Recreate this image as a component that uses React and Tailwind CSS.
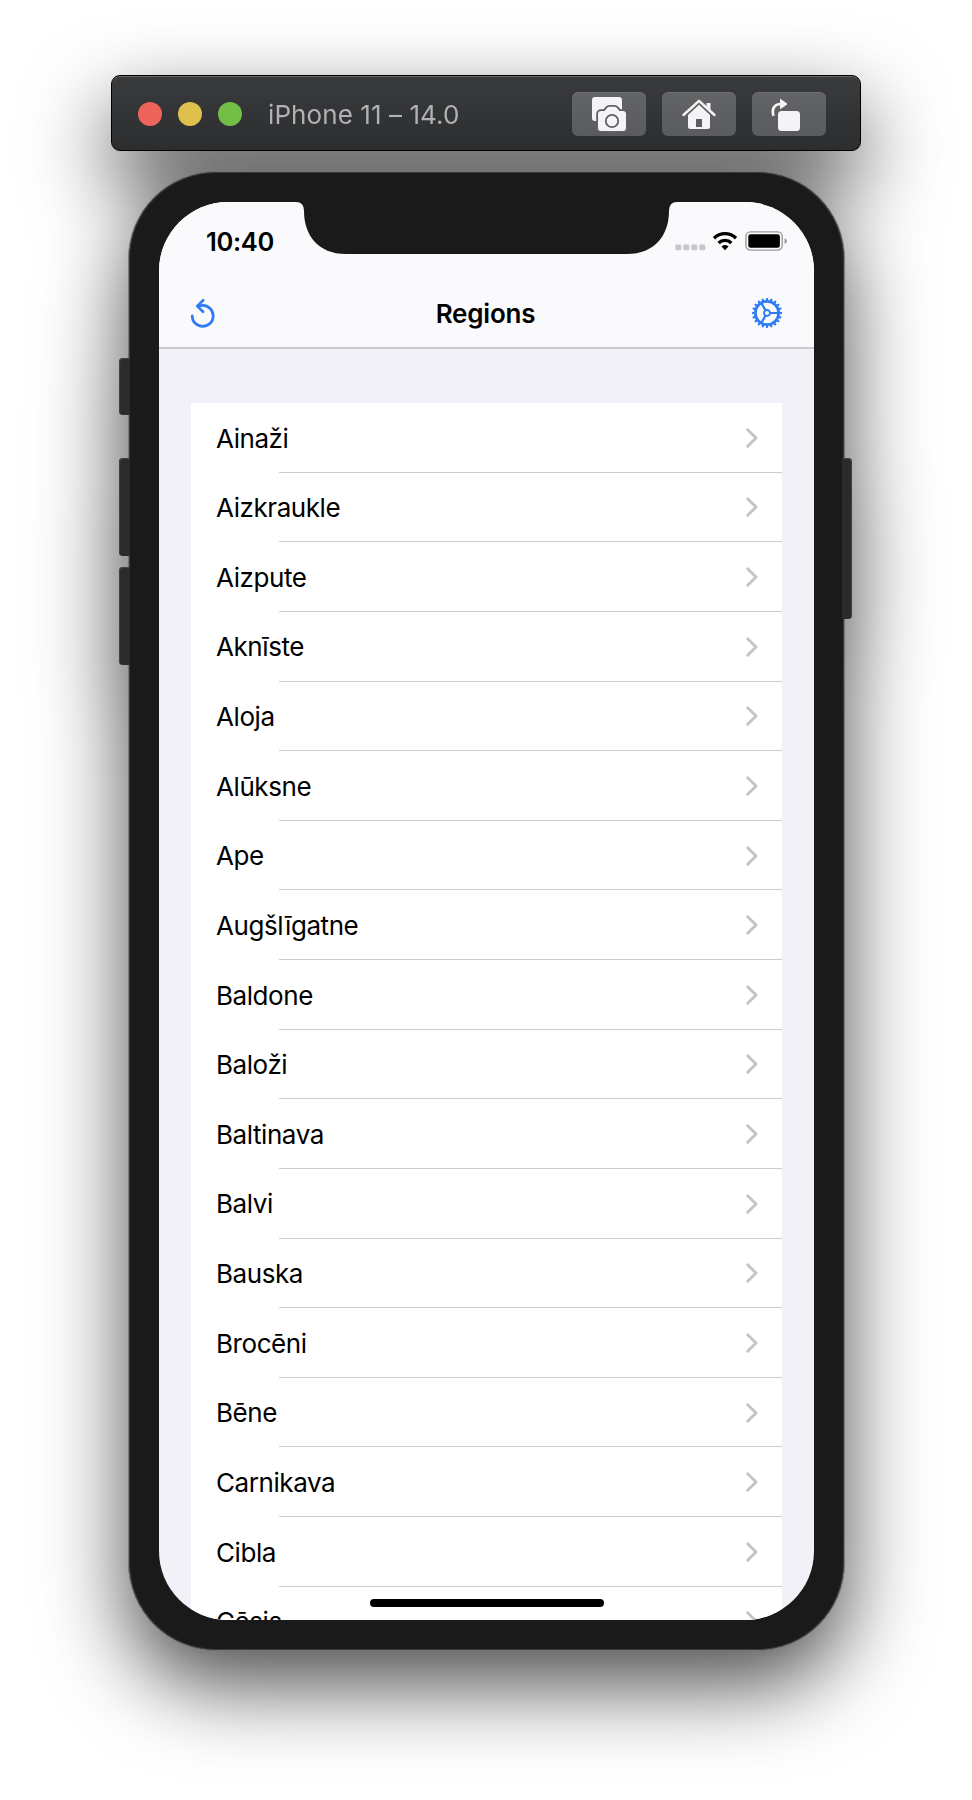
const regions = [
  'Ainaži', 'Aizkraukle', 'Aizpute', 'Aknīste', 'Aloja', 'Alūksne', 'Ape', 'Augšlīgatne', 'Baldone',
  'Baloži', 'Baltinava', 'Balvi', 'Bauska', 'Brocēni', 'Bēne', 'Carnikava', 'Cibla', 'Cēsis',
];

const teeth = Array.from({ length: 20 }, (_, i) => i * 18);

function ToolButton({ children }) {
  return (
    <div className="h-11 w-[74px] rounded-md border-t border-[#727375] bg-gradient-to-b from-[#636466] to-[#5a5b5d]">
      <svg className="-mt-px block" width="74" height="44" viewBox="0 0 74 44">{children}</svg>
    </div>
  );
}

function TitleBar() {
  return (
    <div className="relative z-10 flex h-19 w-[750px] items-center rounded-[9px] border border-black bg-gradient-to-b from-[#3a3b3d] to-[#2c2d2f] pt-[2px] pr-[34px] pl-[26px] shadow-[inset_0_1px_0_#67686a]">
      <div className="flex gap-4">
        <div className="size-6 rounded-full bg-[#ed655a]" />
        <div className="size-6 rounded-full bg-[#e0c04c]" />
        <div className="size-6 rounded-full bg-[#72be47]" />
      </div>
      <div className="ml-[26px] pt-[2px] text-[26px] leading-8 tracking-[0.08px] whitespace-nowrap text-[#b0b1b2]">iPhone 11 – 14.0</div>
      <div className="ml-auto flex gap-4">
        <ToolButton>
          <path d="M23 5h24a3 3 0 0 1 3 3v16H25v5h-2a3 3 0 0 1-3-3V8a3 3 0 0 1 3-3z" fill="#f4f4f6" />
          <path d="M29 19H32.500L35 16Q36 14.800 37.500 14.800H42.500Q44 14.800 45 16L47.500 19H51A3 3 0 0 1 54 22V36A3 3 0 0 1 51 39H29A3 3 0 0 1 26 36V22A3 3 0 0 1 29 19z" fill="#f4f4f6" stroke="#5f6062" strokeWidth="3.600" paintOrder="stroke" />
          <circle cx="40" cy="29" r="6.200" fill="none" stroke="#5f6062" strokeWidth="1.800" />
        </ToolButton>
        <ToolButton>
          <path d="M21.500 23 37 8.800 52.500 23" fill="none" stroke="#f4f4f6" strokeWidth="2.500" strokeLinecap="round" strokeLinejoin="round" />
          <path d="M44.500 11h4v7.500l-4-3.700z" fill="#f4f4f6" />
          <path d="M37 12.800 48 23v11.500q0 2.500-2.500 2.500h-17Q26 37 26 34.500V23z" fill="#f4f4f6" />
          <path d="M34 27h6v8h-6z" fill="#5d5e60" />
        </ToolButton>
        <ToolButton>
          <rect x="26" y="19" width="22" height="20" rx="3.500" fill="#f4f4f6" />
          <path d="M21.500 23.800C19.500 17.500 22 12 29 12" fill="none" stroke="#f4f4f6" strokeWidth="2.700" />
          <path d="M28 7.800q0-1.200 1-.5l5.800 4q.8.700 0 1.400l-5.800 4q-1 .6-1-.6z" fill="#f4f4f6" />
        </ToolButton>
      </div>
    </div>
  );
}

function StatusBar() {
  return (
    <div className="flex h-[78px] items-center justify-between pr-[27px] pl-[47px]">
      <div className="pt-px text-[25.500px] leading-8 font-semibold tracking-[-0.3px]">10:40</div>
      <svg width="114" height="24" viewBox="673 229 114 24">
        <g fill="#c7c7c9">
          <rect x="675.300" y="244.500" width="6" height="5.700" rx="1.300" />
          <rect x="683.300" y="244.500" width="6" height="5.700" rx="1.300" />
          <rect x="691.300" y="244.500" width="6" height="5.700" rx="1.300" />
          <rect x="699.300" y="244.500" width="6" height="5.700" rx="1.300" />
        </g>
        <path d="M714 238.200a15.700 15.700 0 0 1 22 0M718.600 243a9.200 9.200 0 0 1 12.800 0" fill="none" stroke="#000" strokeWidth="3.300" />
        <path d="M721.500 246.400a5.400 5.400 0 0 1 7 0l-3.500 3.800z" />
        <rect x="745.900" y="231.900" width="36.300" height="18.200" rx="4.500" fill="none" stroke="#9b9b9d" strokeWidth="1.400" />
        <rect x="748.300" y="234.300" width="31.600" height="13.400" rx="2.300" />
        <path d="M784.700 238.200q2.100.9 2.100 2.900t-2.100 2.900z" fill="#8b8b8d" />
      </svg>
    </div>
  );
}

function NavBar() {
  return (
    <div className="flex h-[67px] items-center justify-between pr-[31px] pb-px pl-[29px]">
      <svg width="30" height="34" viewBox="188 296 30 34" fill="none" stroke="#2f7cf6" strokeWidth="2.700" strokeLinecap="round" strokeLinejoin="round">
        <path d="M192.200 315.900a10.500 10.500 0 1 0 10.500-10.500q-2.600 0-4.700.700" />
        <path d="M203.200 300.200 197.300 306.100 203 311.700" />
      </svg>
      <div className="pt-px pl-[2px] text-[26px] leading-8 font-semibold tracking-[-0.2px]">Regions</div>
      <svg width="32" height="32" viewBox="-16 -16 32 32" fill="none" stroke="#2f7cf6">
        <circle r="11.600" strokeWidth="2.700" />
        <circle r="3" strokeWidth="1.900" />
        <path d="M3 0H11.500M-1.500-2.600-5.700-10M-1.500 2.600-5.700 10" strokeWidth="2.200" />
        {teeth.map((a) => (
          <path key={a} d="M12.300-1.400 15.100-.8V.8L12.300 1.400z" fill="#2f7cf6" stroke="none" transform={`rotate(${a})`} />
        ))}
      </svg>
    </div>
  );
}

function Row({ name }) {
  return (
    <div className="relative flex h-[69.630px] items-center justify-between pr-[24.500px] pl-[25px]">
      <span className="pt-[1.500px] text-[26px] leading-8 tracking-[-0.43px]">{name}</span>
      <svg width="12" height="20" viewBox="0 0 12 20" fill="none" stroke="#c4c4c6" strokeWidth="2.900" strokeLinecap="round" strokeLinejoin="round">
        <path d="M1.700 1.800 10 10 1.700 18.200" />
      </svg>
      <div className="absolute right-0 bottom-0 left-[88px] h-px bg-[#cdcdcf]" />
    </div>
  );
}

function Phone() {
  return (
    <div className="relative mt-5 ml-px h-[1480px] w-[717px] rounded-[88px] border border-[#777] bg-[#1a1a1a] px-[30px] pt-[30px] shadow-[inset_0_0_0_1px_#3a3a3a]">
      <div className="absolute top-[186px] -left-[10px] h-[57px] w-[11px] rounded-[4px] rounded-r-[2px] bg-[#2b2b2b] shadow-[inset_1px_1px_1px_#444]" />
      <div className="absolute top-[286px] -left-[10px] h-[98px] w-[11px] rounded-[4px] rounded-r-[2px] bg-[#2b2b2b] shadow-[inset_1px_1px_1px_#444]" />
      <div className="absolute top-[395px] -left-[10px] h-[98px] w-[11px] rounded-[4px] rounded-r-[2px] bg-[#2b2b2b] shadow-[inset_1px_1px_1px_#444]" />
      <div className="absolute top-[286px] -right-[8px] h-[161px] w-[10px] rounded-[4px] rounded-l-[2px] bg-[#2b2b2b] shadow-[inset_-1px_1px_1px_#444]" />
      <div className="relative h-[1418px] w-[655px] overflow-hidden rounded-[69px] bg-[#f2f1f7]">
        <div className="border-b-2 border-[#cbcbcf] bg-[#fafafd]">
          <StatusBar />
          <NavBar />
        </div>
        <div className="mx-8 mt-[54px] bg-white">
          {regions.map((name) => <Row key={name} name={name} />)}
        </div>
        <svg className="absolute top-0 left-[137px]" width="381" height="52" viewBox="296 202 381 52">
          <path d="M296 202Q304 202 304 211C304 235 318 254 346 254H627C655 254 669 235 669 211Q669 202 677 202z" fill="#1a1a1a" />
        </svg>
        <div className="absolute bottom-[13px] left-[211px] h-2 w-[234px] rounded-full bg-black" />
      </div>
    </div>
  );
}

export default function App() {
  return (
    <div className="h-[1800px] w-[972px] overflow-hidden bg-white font-[Inter,'Liberation_Sans',sans-serif] text-black">
      <div className="flex flex-col items-center pt-[75px] drop-shadow-[0_34px_42px_rgba(0,0,0,0.7)]">
        <TitleBar />
        <Phone />
      </div>
    </div>
  );
}
